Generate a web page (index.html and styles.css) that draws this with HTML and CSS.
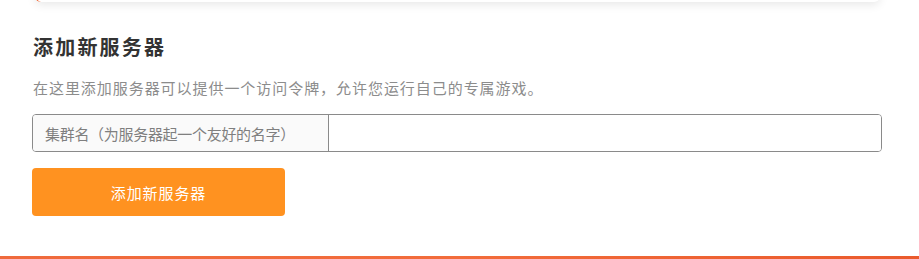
FILE: index.html
```html
<!DOCTYPE html>
<html lang="zh-CN">
<head>
<meta charset="utf-8">
<title>添加新服务器</title>
<link rel="stylesheet" href="styles.css">
</head>
<body>
<div class="topcard"></div>
<section class="add-server">
  <h2 class="title">添加新服务器</h2>
  <p class="desc">在这里添加服务器可以提供一个访问令牌，允许您运行自己的专属游戏。</p>
  <div class="input-group">
    <span class="addon">集群名（为服务器起一个友好的名字）</span>
    <input class="field" type="text">
  </div>
  <button class="btn" type="button">添加新服务器</button>
</section>
<div class="footer-band"></div>
</body>
</html>
```

FILE: styles.css
```css
html, body {
  margin: 0;
  padding: 0;
  background: #fff;
  overflow: hidden;
}
body {
  width: 919px;
  height: 259px;
  font-family: "Noto Sans CJK SC", "Noto Sans", sans-serif;
  display: flex;
  flex-direction: column;
}
.topcard {
  height: 20px;
  margin: -18px 39px 0 35px;
  background: #fff;
  border-left: 2px solid #f26b3a;
  border-radius: 0 0 6px 6px;
  box-shadow: 0 3px 10px rgba(0, 0, 0, 0.09);
  flex: none;
}
.add-server {
  padding: 0 37px 0 32px;
  display: flex;
  flex-direction: column;
  align-items: flex-start;
  flex: 1;
}
.title {
  margin: 31px 0 0 1px;
  font-size: 20px;
  line-height: 28px;
  font-weight: 700;
  letter-spacing: 2.2px;
  color: #333;
}
.desc {
  margin: 15px 0 0 1px;
  font-size: 15px;
  line-height: 24px;
  letter-spacing: 0.95px;
  color: #8c8c8c;
}
.input-group {
  margin-top: 14px;
  align-self: stretch;
  display: flex;
  height: 38px;
  box-sizing: border-box;
  border: 1px solid #8a8a8a;
  border-radius: 4px;
  overflow: hidden;
}
.addon {
  display: flex;
  align-items: center;
  width: 296px;
  box-sizing: border-box;
  padding-left: 12px;
  background: #fafafa;
  border-right: 1px solid #8a8a8a;
  font-size: 15px;
  letter-spacing: -0.3px;
  color: #7f7f7f;
  white-space: nowrap;
}
.field {
  flex: 1;
  border: 0;
  outline: none;
  background: #fff;
  font: inherit;
}
.btn {
  margin-top: 16px;
  width: 253px;
  height: 48px;
  border: 0;
  border-radius: 4px;
  background: #ff9220;
  color: #fff;
  font-family: inherit;
  font-size: 15px;
  letter-spacing: 0.9px;
  cursor: pointer;
}
.footer-band {
  height: 3px;
  flex: none;
  background: linear-gradient(90deg, #ef6a3c 0%, #f26c3b 50%, #ea5a2c 100%);
}
```
